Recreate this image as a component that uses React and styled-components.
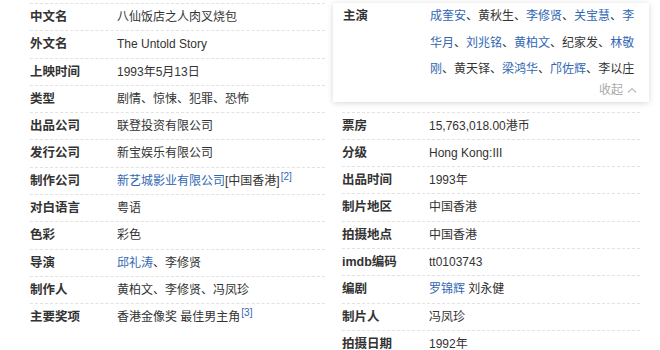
import React from "react";
import styled, { createGlobalStyle } from "styled-components";

const GlobalStyle = createGlobalStyle`
  body {
    margin: 0;
    background: #fff;
    color: #333;
    font-family: Arial, "Liberation Sans", "Noto Sans CJK SC", sans-serif;
  }
`;

const Page = styled.div`
  display: flex;
  align-items: flex-start;
  gap: 17px;
  padding: 3px 0 0 30px;
`;

const Column = styled.dl`
  margin: 0;
  width: ${({ $w }) => $w}px;
`;

const Row = styled.div`
  display: flex;
  border-top: 1px dashed #e2e2e2;
  line-height: 26.3px;
`;

const Label = styled.dt`
  width: 87px;
  flex-shrink: 0;
  font-size: 12.5px;
  font-weight: bold;
  color: #333;
`;

const Value = styled.dd`
  margin: 0;
  flex: 1;
  font-size: 12px;
  color: #333;
`;

const Link = styled.a`
  color: #2f66b3;
  text-decoration: none;
`;

const Ref = styled.sup`
  font-size: 10px;
  line-height: 0;
  color: #2f66b3;
  margin-left: 1px;
`;

const CastSlot = styled.div`
  height: 108.5px;
`;

const CastCard = styled.div`
  margin: 0 -9px;
  padding: 0 12px 5px 10px;
  background: #fff;
  box-shadow: 0 1px 6px rgba(0, 0, 0, 0.16);
`;

const CastRow = styled.div`
  display: flex;
  line-height: 26.5px;
`;

const Collapse = styled.div`
  display: flex;
  justify-content: flex-end;
  align-items: center;
  gap: 4px;
  font-size: 12px;
  line-height: 14px;
  color: #aaa;
`;

const left = [
  ["中文名", "八仙饭店之人肉叉烧包"],
  ["外文名", "The Untold Story"],
  ["上映时间", "1993年5月13日"],
  ["类型", "剧情、惊悚、犯罪、恐怖"],
  ["出品公司", "联登投资有限公司"],
  ["发行公司", "新宝娱乐有限公司"],
  [
    "制作公司",
    <>
      <Link>新艺城影业有限公司</Link>[中国香港]<Ref>[2]</Ref>
    </>,
  ],
  ["对白语言", "粤语"],
  ["色彩", "彩色"],
  [
    "导演",
    <>
      <Link>邱礼涛</Link>、李修贤
    </>,
  ],
  ["制作人", "黄柏文、李修贤、冯凤珍"],
  [
    "主要奖项",
    <>
      香港金像奖 最佳男主角<Ref>[3]</Ref>
    </>,
  ],
];

const right = [
  ["票房", "15,763,018.00港币"],
  ["分级", "Hong Kong:III"],
  ["出品时间", "1993年"],
  ["制片地区", "中国香港"],
  ["拍摄地点", "中国香港"],
  ["imdb编码", "tt0103743"],
  [
    "编剧",
    <>
      <Link>罗锦辉</Link> 刘永健
    </>,
  ],
  ["制片人", "冯凤珍"],
  ["拍摄日期", "1992年"],
];

// name, is it a link
const cast = [
  ["成奎安", true],
  ["黄秋生", false],
  ["李修贤", true],
  ["关宝慧", true],
  ["李华月", true],
  ["刘兆铭", true],
  ["黄柏文", true],
  ["纪家发", false],
  ["林敬刚", true],
  ["黄天铎", false],
  ["梁鸿华", true],
  ["邝佐辉", true],
  ["李以庄", false],
];

const Chevron = () => (
  <svg width="10" height="6" viewBox="0 0 10 6">
    <polyline points="1,5.5 5,1.5 9,5.5" fill="none" stroke="#bbb" strokeWidth="1.2" />
  </svg>
);

export default function App() {
  return (
    <>
      <GlobalStyle />
      <Page>
        <Column $w={295}>
          {left.map(([k, v]) => (
            <Row key={k}>
              <Label>{k}</Label>
              <Value>{v}</Value>
            </Row>
          ))}
        </Column>
        <Column $w={298}>
          <CastSlot>
            <CastCard>
              <CastRow>
                <Label>主演</Label>
                <Value>
                  {cast.map(([name, linked], i) => (
                    <React.Fragment key={name}>
                      {linked ? <Link>{name}</Link> : name}
                      {i < cast.length - 1 && "、"}
                    </React.Fragment>
                  ))}
                </Value>
              </CastRow>
              <Collapse>
                收起
                <Chevron />
              </Collapse>
            </CastCard>
          </CastSlot>
          {right.map(([k, v]) => (
            <Row key={k}>
              <Label>{k}</Label>
              <Value>{v}</Value>
            </Row>
          ))}
        </Column>
      </Page>
    </>
  );
}
